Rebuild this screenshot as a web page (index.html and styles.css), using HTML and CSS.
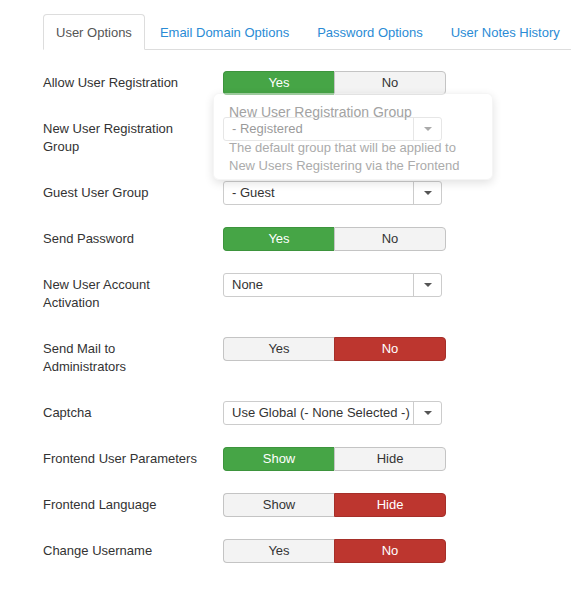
FILE: index.html
```html
<!DOCTYPE html>
<html lang="en">
<head>
    <meta charset="UTF-8">
    <title>Users: Options</title>
    <link rel="stylesheet" href="styles.css">
</head>
<body>

<div class="page">

    <!-- Tabs -->
    <ul class="nav-tabs">
        <li class="active"><a href="#">User Options</a></li>
        <li><a href="#">Email Domain Options</a></li>
        <li><a href="#">Password Options</a></li>
        <li><a href="#">User Notes History</a></li>
    </ul>

    <form class="form-horizontal">

        <div class="control-group">
            <div class="control-label">Allow User Registration</div>
            <div class="controls">
                <div class="toggle">
                    <span class="opt on-green">Yes</span>
                    <span class="opt">No</span>
                </div>
            </div>
        </div>

        <div class="control-group">
            <div class="control-label">New User Registration Group</div>
            <div class="controls has-popover">
                <div class="select">
                    <span class="select-value">- Registered</span>
                    <span class="select-arrow"><b></b></span>
                </div>
                <!-- tooltip som ligger over felterne -->
                <div class="popover">
                    <div class="popover-title">New User Registration Group</div>
                    <div class="popover-content">The default group that will be applied to New Users Registering via the Frontend</div>
                </div>
            </div>
        </div>

        <div class="control-group">
            <div class="control-label">Guest User Group</div>
            <div class="controls">
                <div class="select">
                    <span class="select-value">- Guest</span>
                    <span class="select-arrow"><b></b></span>
                </div>
            </div>
        </div>

        <div class="control-group">
            <div class="control-label">Send Password</div>
            <div class="controls">
                <div class="toggle">
                    <span class="opt on-green">Yes</span>
                    <span class="opt">No</span>
                </div>
            </div>
        </div>

        <div class="control-group">
            <div class="control-label">New User Account Activation</div>
            <div class="controls">
                <div class="select">
                    <span class="select-value">None</span>
                    <span class="select-arrow"><b></b></span>
                </div>
            </div>
        </div>

        <div class="control-group">
            <div class="control-label">Send Mail to Administrators</div>
            <div class="controls">
                <div class="toggle">
                    <span class="opt">Yes</span>
                    <span class="opt on-red">No</span>
                </div>
            </div>
        </div>

        <div class="control-group">
            <div class="control-label">Captcha</div>
            <div class="controls">
                <div class="select">
                    <span class="select-value">Use Global (- None Selected -)</span>
                    <span class="select-arrow"><b></b></span>
                </div>
            </div>
        </div>

        <div class="control-group">
            <div class="control-label">Frontend User Parameters</div>
            <div class="controls">
                <div class="toggle">
                    <span class="opt on-green">Show</span>
                    <span class="opt">Hide</span>
                </div>
            </div>
        </div>

        <div class="control-group">
            <div class="control-label">Frontend Language</div>
            <div class="controls">
                <div class="toggle">
                    <span class="opt">Show</span>
                    <span class="opt on-red">Hide</span>
                </div>
            </div>
        </div>

        <div class="control-group">
            <div class="control-label">Change Username</div>
            <div class="controls">
                <div class="toggle">
                    <span class="opt">Yes</span>
                    <span class="opt on-red">No</span>
                </div>
            </div>
        </div>

    </form>
</div>

</body>
</html>
```

FILE: styles.css
```css
html, body {
    margin: 0;
    background: #fff;
}

body {
    font-family: "Liberation Sans", Arial, sans-serif;
    font-size: 13px;
    line-height: 18px;
    color: #333;
}

.page {
    padding: 14px 0 0 43px;
    overflow: hidden;
}

/* Tabs */
.nav-tabs {
    display: flex;
    flex-wrap: nowrap;
    list-style: none;
    margin: 0 0 19px 0;
    padding: 0;
    border-bottom: 1px solid #ddd;
    white-space: nowrap;
}

.nav-tabs li {
    margin-bottom: -1px;
    margin-right: 2px;
}

.nav-tabs a {
    display: block;
    padding: 9px 12px 7px 12px;
    line-height: 18px;
    border: 1px solid transparent;
    border-radius: 4px 4px 0 0;
    color: #2a8bd5;
    text-decoration: none;
}

.nav-tabs .active a {
    color: #555;
    background: #fff;
    border-color: #ddd #ddd transparent #ddd;
}

/* Form rows */
.control-group {
    display: flex;
    margin-bottom: 18px;
}

.control-label {
    width: 156px;
    margin-right: 24px;
    padding: 5px 0;
    line-height: 18px;
}

.controls {
    padding-top: 2px;
}

.has-popover {
    position: relative;
}

/* Yes / No knapper */
.toggle {
    display: flex;
    width: 223px;
    height: 24px;
}

.opt {
    flex: 1;
    box-sizing: border-box;
    height: 24px;
    line-height: 22px;
    text-align: center;
    background: #f3f3f3;
    border: 1px solid #c4c4c4;
    color: #333;
}

.opt:first-child {
    border-radius: 4px 0 0 4px;
    border-right: none;
}

.opt:last-child {
    border-radius: 0 4px 4px 0;
}

.on-green {
    background: #46a546;
    border-color: #3d943d;
    color: #fff;
}

.on-red {
    background: #bd362f;
    border-color: #a52f29;
    color: #fff;
}

/* Dropdown */
.select {
    display: flex;
    box-sizing: border-box;
    width: 219px;
    height: 24px;
    border: 1px solid #ccc;
    border-radius: 3px;
    background: #fff;
}

.select-value {
    flex: 1;
    padding-left: 8px;
    line-height: 22px;
    color: #333;
    white-space: nowrap;
    overflow: hidden;
}

.select-arrow {
    width: 27px;
    border-left: 1px solid #ccc;
    display: flex;
    align-items: center;
    justify-content: center;
}

.select-arrow b {
    width: 0;
    height: 0;
    border-left: 4px solid transparent;
    border-right: 4px solid transparent;
    border-top: 4px solid #555;
}

/* Tooltip */
.popover {
    position: absolute;
    z-index: 5;
    left: -10px;
    top: -22px;
    width: 280px;
    box-sizing: border-box;
    padding-bottom: 4px;
    background: rgba(255, 255, 255, 0.5);
    border: 1px solid rgba(0, 0, 0, 0.04);
    border-radius: 6px;
    box-shadow: 0 3px 10px rgba(0, 0, 0, 0.12);
}

.popover-title {
    padding: 9px 15px 8px 15px;
    font-size: 14px;
    line-height: 18px;
    color: #a3a3a3;
}

.popover-content {
    padding: 10px 15px 0 15px;
    line-height: 18px;
    color: #ababab;
}
```
